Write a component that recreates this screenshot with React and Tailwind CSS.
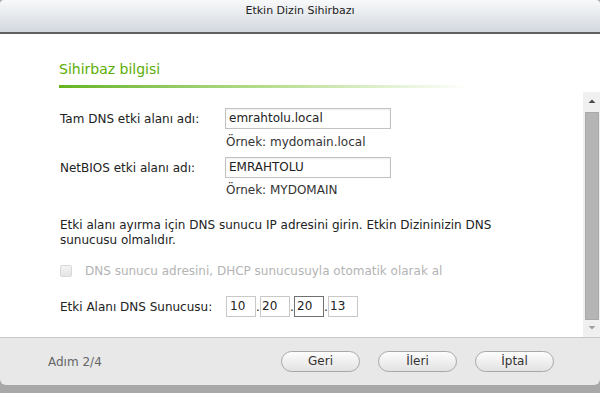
export default function App() {
    const body = { fontFamily: '"DejaVu Sans", Verdana, sans-serif' };

    return (
        <div className="w-[600px] h-[393px] bg-[#a8a8a8] flex flex-col overflow-hidden" style={body}>
            {/* title bar */}
            <header className="h-[34px] shrink-0 rounded-t-[4px] bg-gradient-to-b from-[#f8f9fa] to-[#d3d8df] border-b-2 border-[#606060] flex justify-center pt-[3px] text-[11px] text-[#222]">
                Etkin Dizin Sihirbazı
            </header>

            {/* content */}
            <div className="h-[303px] shrink-0 bg-white flex">
                <div className="flex-1 pl-[59px] pt-[27px]">
                    <h2 className="text-[14px] leading-[17px] text-[#5cae06]">Sihirbaz bilgisi</h2>
                    <div className="mt-[7px] w-[410px] h-[3px] bg-gradient-to-r from-[#66b41c] via-[#b5dc8c] to-transparent"></div>

                    <div className="pl-[1px] pt-[20px] text-[12px] text-[#222]">
                        <div className="flex items-center">
                            <span className="w-[165px]">Tam DNS etki alanı adı:</span>
                            <div className="w-[166px] h-[21px] border border-[#c2c2c2] shadow-[inset_0_1px_2px_rgba(0,0,0,0.08)] px-[3px] leading-[19px]">emrahtolu.local</div>
                        </div>
                        <div className="ml-[166px] mt-[6px] leading-[15px] text-[#333]">Örnek: mydomain.local</div>
                        <div className="flex items-center mt-[7px]">
                            <span className="w-[165px]">NetBIOS etki alanı adı:</span>
                            <div className="w-[166px] h-[21px] border border-[#c2c2c2] shadow-[inset_0_1px_2px_rgba(0,0,0,0.08)] px-[3px] leading-[19px]">EMRAHTOLU</div>
                        </div>
                        <div className="ml-[166px] mt-[5px] leading-[15px] text-[#333]">Örnek: MYDOMAIN</div>

                        <p className="mt-[20px] leading-[15px] w-[460px]">
                            Etki alanı ayırma için DNS sunucu IP adresini girin. Etkin Dizininizin DNS sunucusu olmalıdır.
                        </p>

                        <div className="mt-[15px] flex items-center h-[15px] text-[#b4b4b4]">
                            <span className="w-[12px] h-[12px] border border-[#d8d8d8] bg-gradient-to-b from-[#f4f4f4] to-[#e4e4e4] rounded-[2px]"></span>
                            <span className="ml-[13px]">DNS sunucu adresini, DHCP sunucusuyla otomatik olarak al</span>
                        </div>

                        <div className="mt-[18px] flex items-center">
                            <span className="w-[166px]">Etki Alanı DNS Sunucusu:</span>
                            <div className="flex items-center">
                                <div className="w-[30px] h-[21px] border border-[#c8c8c8] px-[3px] leading-[19px]">10</div>
                                <span className="w-[4px] text-center">.</span>
                                <div className="w-[30px] h-[21px] border border-[#c8c8c8] px-[1px] leading-[19px]">20</div>
                                <span className="w-[4px] text-center">.</span>
                                <div className="w-[30px] h-[21px] border border-[#707070] px-[2px] leading-[19px]">20</div>
                                <span className="w-[4px] text-center">.</span>
                                <div className="w-[30px] h-[21px] border border-[#c8c8c8] px-[1px] leading-[19px]">13</div>
                            </div>
                        </div>
                    </div>
                </div>

                {/* scrollbar */}
                <div className="w-[17px] pt-[58px] flex flex-col">
                    <div className="flex-1 bg-[#f0f0f0] flex flex-col items-center">
                        <svg width="8" height="20" viewBox="0 0 8 20" className="shrink-0">
                            <path d="M0.5 11 L4 7.5 L7.5 11 Z" fill="#4a4a4a" />
                        </svg>
                        <div className="w-[14px] flex-1 bg-[#b5b5b5] border border-[#a9a9a9]"></div>
                        <svg width="8" height="17" viewBox="0 0 8 17" className="shrink-0">
                            <path d="M0.5 6 L4 9.5 L7.5 6 Z" fill="#a0a0a0" />
                        </svg>
                    </div>
                </div>
            </div>

            {/* footer */}
            <footer className="h-[48px] shrink-0 bg-[#e8e8e8] border-t border-[#c8c8c8] rounded-b-[6px] flex items-center pl-[48px] pr-[46px] text-[12px]">
                <span className="text-[#666]">Adım 2/4</span>
                <div className="ml-auto flex gap-[18px]">
                    {['Geri', 'İleri', 'İptal'].map((label) => (
                        <button
                            key={label}
                            className="w-[79px] h-[21px] rounded-full border border-[#a8a8a8] bg-gradient-to-b from-[#fdfdfd] to-[#e2e2e2] text-[#333] leading-[19px]"
                        >
                            {label}
                        </button>
                    ))}
                </div>
            </footer>
        </div>
    );
}
